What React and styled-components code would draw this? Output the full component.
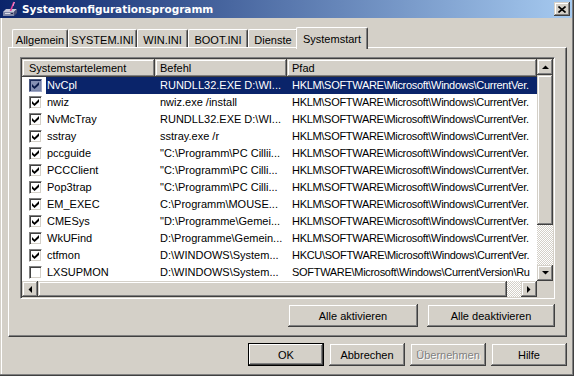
import React from "react";
import styled, { createGlobalStyle, css } from "styled-components";

const GlobalStyle = createGlobalStyle`
  html, body {
    margin: 0;
    padding: 0;
    background: #fff;
  }
  body {
    font-family: "Liberation Sans", Arial, sans-serif;
    font-size: 11px;
    color: #000;
  }
`;

const raised = css`
  background: #d4d0c8;
  box-shadow: inset -1px -1px #404040, inset 1px 1px #d4d0c8,
    inset -2px -2px #808080, inset 2px 2px #fff;
`;

const Window = styled.div`
  width: 574px;
  height: 376px;
  box-sizing: border-box;
  background: #d4d0c8;
  display: flex;
  flex-direction: column;
  box-shadow: inset -1px -1px #404040, inset -2px -2px #808080,
    inset 1px 0 #d4d0c8, inset 2px 0 #fff;
`;

const TitleBar = styled.div`
  height: 18px;
  margin-right: 2px;
  display: flex;
  align-items: center;
  padding-left: 2px;
  background: linear-gradient(to right, #0a246a, #a6caf0);
  color: #fff;
  font-family: "DejaVu Sans", sans-serif;
  font-weight: bold;
  font-size: 10.5px;
`;

const TitleText = styled.span`
  margin-left: 4px;
  flex: 1;
`;

const CloseBtn = styled.div`
  width: 16px;
  height: 14px;
  margin-right: 2px;
  display: flex;
  align-items: center;
  justify-content: center;
  ${raised};
`;

const Body = styled.div`
  flex: 1;
  display: flex;
  flex-direction: column;
  padding: 9px 7px 0 8px;
`;

const TabRow = styled.div`
  height: 20px;
  display: flex;
  align-items: flex-end;
  padding-left: 4px;
`;

const Tab = styled.div`
  box-sizing: border-box;
  width: ${(p) => p.$w}px;
  height: 18px;
  padding-top: 2px;
  display: flex;
  align-items: center;
  justify-content: center;
  background: #d4d0c8;
  border-top: 1px solid #fff;
  border-left: 1px solid #fff;
  border-right: 1px solid #404040;
  border-top-left-radius: 2px;
  border-top-right-radius: 2px;
  box-shadow: inset -1px 0 #808080;
  white-space: nowrap;

  ${(p) =>
    p.$active &&
    css`
      height: 22px;
      padding-top: 0;
      margin: 0 -2px -2px;
      position: relative;
      z-index: 1;
    `}
`;

const Panel = styled.div`
  box-sizing: border-box;
  height: 290px;
  border-top: 1px solid #fff;
  border-left: 1px solid #fff;
  border-right: 1px solid #404040;
  border-bottom: 1px solid #404040;
  box-shadow: inset -1px -1px #808080;
  padding: 9px 11px 9px 11px;
  display: flex;
  flex-direction: column;
  gap: 5px;
`;

const ListView = styled.div`
  height: 242px;
  box-sizing: border-box;
  background: #fff;
  border: 1px solid;
  border-color: #808080 #fff #fff #808080;
  box-shadow: inset 1px 1px #404040, inset -1px -1px #d4d0c8;
  padding: 1px;
  display: grid;
  grid-template-columns: 1fr 16px;
  grid-template-rows: 1fr 16px;
  overflow: hidden;
`;

const Table = styled.div`
  min-width: 0;
  overflow: hidden;
  display: flex;
  flex-direction: column;
`;

const HeaderRow = styled.div`
  display: flex;
  height: 18px;
  flex: none;
`;

const HeaderCell = styled.div`
  box-sizing: border-box;
  ${(p) => (p.$w ? `flex: 0 0 ${p.$w}px;` : "flex: 1;")}
  padding-left: ${(p) => p.$pad || 6}px;
  display: flex;
  align-items: center;
  white-space: nowrap;
  overflow: hidden;
  ${raised};
`;

const Row = styled.div`
  display: flex;
  height: 17px;
  flex: none;
`;

const CheckCell = styled.div`
  flex: 0 0 24px;
  box-sizing: border-box;
  padding-left: 7px;
  display: flex;
  align-items: center;
`;

const Cell = styled.div`
  box-sizing: border-box;
  ${(p) => (p.$w ? `flex: 0 0 ${p.$w}px;` : "flex: 1; min-width: 0;")}
  padding-left: ${(p) => p.$pad}px;
  line-height: 17px;
  white-space: nowrap;
  overflow: hidden;
  letter-spacing: ${(p) => p.$tight || 0}px;
  background: ${(p) => (p.$sel ? "#0a246a" : "transparent")};
  color: ${(p) => (p.$sel ? "#fff" : "#000")};
`;

const Box = styled.span`
  width: 13px;
  height: 13px;
  box-sizing: border-box;
  border: 1px solid;
  border-color: ${(p) =>
    p.$sel ? "#4a5880 #a0a8c8 #a0a8c8 #4a5880" : "#808080 #fff #fff #808080"};
  box-shadow: ${(p) =>
    p.$sel
      ? "inset 1px 1px #1a2a5a, inset -1px -1px #7a86a8"
      : "inset 1px 1px #404040, inset -1px -1px #d4d0c8"};
  background: ${(p) => (p.$sel ? "#8590b4" : "#fff")};
  display: flex;
  align-items: center;
  justify-content: center;
`;

const VScroll = styled.div`
  display: flex;
  flex-direction: column;
`;

const HScroll = styled.div`
  display: flex;
  min-width: 0;
`;

const ScrollBtn = styled.div`
  flex: none;
  width: 16px;
  height: 16px;
  box-sizing: border-box;
  display: flex;
  align-items: center;
  justify-content: center;
  ${raised};
`;

const Thumb = styled.div`
  flex: none;
  box-sizing: border-box;
  ${(p) => (p.$vertical ? `height: ${p.$size}px;` : `width: ${p.$size}px;`)}
  ${raised};
`;

const Track = styled.div`
  flex: 1;
  background: repeating-conic-gradient(#d4d0c8 0 25%, #fff 0 50%) 0 0 / 2px 2px;
`;

const Corner = styled.div`
  background: #d4d0c8;
`;

const ButtonRow = styled.div`
  display: flex;
  justify-content: flex-end;
  gap: ${(p) => p.$gap}px;
  flex: none;
  margin-top: ${(p) => p.$top || 0}px;
`;

const Button = styled.div`
  box-sizing: border-box;
  width: ${(p) => p.$w}px;
  height: 23px;
  display: flex;
  align-items: center;
  justify-content: center;
  ${raised};
  ${(p) =>
    p.$default &&
    css`
      box-shadow: inset 0 0 0 1px #000, inset -2px -2px #404040,
        inset 2px 2px #fff, inset -3px -3px #808080;
    `}
  ${(p) =>
    p.$disabled &&
    css`
      color: #808080;
      text-shadow: 1px 1px #fff;
    `}
`;

const Arrow = ({ dir }) => {
  const pts = {
    up: "0,4 7,4 3.5,0.5",
    down: "0,0 7,0 3.5,3.5",
    left: "4,0 4,7 0.5,3.5",
    right: "0,0 0,7 3.5,3.5",
  }[dir];
  const vertical = dir === "up" || dir === "down";
  return (
    <svg
      width={vertical ? 7 : 4}
      height={vertical ? 4 : 7}
      viewBox={vertical ? "0 0 7 4" : "0 0 4 7"}
    >
      <polygon points={pts} fill="#000" />
    </svg>
  );
};

const CheckMark = ({ color }) => (
  <svg width="7" height="7" viewBox="0 0 7 7">
    <polygon points="0,2 2.5,4.5 7,0 7,3 2.5,7 0,4.8" fill={color} />
  </svg>
);

const AppIcon = () => (
  <svg width="16" height="16" viewBox="0 0 16 16">
    <polygon points="1,11 4,8 15,8 12,11" fill="#c8c8d8" />
    <rect x="1" y="11" width="11" height="4" fill="#8088a8" />
    <polygon points="12,11 15,8 15,12 12,15" fill="#4a5078" />
    <rect x="3" y="12" width="5" height="1" fill="#d8dce8" />
    <rect x="9" y="12" width="2" height="1" fill="#20284a" />
    <line x1="12" y1="1" x2="8.5" y2="10" stroke="#e0409a" strokeWidth="1.6" />
    <line x1="12.5" y1="1" x2="11" y2="5" stroke="#ffb0e0" strokeWidth="0.8" />
  </svg>
);

const CloseGlyph = () => (
  <svg width="8" height="7" viewBox="0 0 8 7">
    <path d="M0.5 0.5 L7.5 6.5 M7.5 0.5 L0.5 6.5" stroke="#000" strokeWidth="1.6" />
  </svg>
);

const HK = "HKLM\\SOFTWARE\\Microsoft\\Windows\\CurrentVer.";

const rows = [
  ["NvCpl", "RUNDLL32.EXE D:\\WI...", HK, true],
  ["nwiz", "nwiz.exe /install", HK, true],
  ["NvMcTray", "RUNDLL32.EXE D:\\WI...", HK, true],
  ["sstray", "sstray.exe /r", HK, true],
  ["pccguide", "\"C:\\Programm\\PC Cillii...", HK, true],
  ["PCCClient", "\"C:\\Programm\\PC Cilli...", HK, true],
  ["Pop3trap", "\"C:\\Programm\\PC Cilli...", HK, true],
  ["EM_EXEC", "C:\\Programm\\MOUSE...", HK, true],
  ["CMESys", "\"D:\\Programme\\Gemei...", HK, true],
  ["WkUFind", "D:\\Programme\\Gemein...", HK, true],
  ["ctfmon", "D:\\WINDOWS\\System...", "HKCU\\SOFTWARE\\Microsoft\\Windows\\CurrentVer.", true],
  ["LXSUPMON", "D:\\WINDOWS\\System...", "SOFTWARE\\Microsoft\\Windows\\CurrentVersion\\Ru", false],
];

const tabs = [
  ["Allgemein", 56],
  ["SYSTEM.INI", 69],
  ["WIN.INI", 51],
  ["BOOT.INI", 60],
  ["Dienste", 50],
  ["Systemstart", 72],
];

export default function App() {
  return (
    <>
      <GlobalStyle />
      <Window>
        <TitleBar>
          <AppIcon />
          <TitleText>Systemkonfigurationsprogramm</TitleText>
          <CloseBtn>
            <CloseGlyph />
          </CloseBtn>
        </TitleBar>
        <Body>
          <TabRow>
            {tabs.map(([label, w]) => (
              <Tab key={label} $w={w} $active={label === "Systemstart"}>
                {label}
              </Tab>
            ))}
          </TabRow>
          <Panel>
            <ListView>
              <Table>
                <HeaderRow>
                  <HeaderCell $w={133} $pad={7}>Systemstartelement</HeaderCell>
                  <HeaderCell $w={132} $pad={5}>Befehl</HeaderCell>
                  <HeaderCell $pad={5}>Pfad</HeaderCell>
                </HeaderRow>
                {rows.map(([name, cmd, path, checked], i) => {
                  const sel = i === 0;
                  return (
                    <Row key={name}>
                      <CheckCell>
                        <Box $sel={sel}>
                          {checked && <CheckMark color={sel ? "#0a1a4a" : "#000"} />}
                        </Box>
                      </CheckCell>
                      <Cell $w={109} $pad={1} $sel={sel}>{name}</Cell>
                      <Cell $w={132} $pad={5} $sel={sel}>{cmd}</Cell>
                      <Cell $pad={5} $sel={sel} $tight={-0.3}>{path}</Cell>
                    </Row>
                  );
                })}
              </Table>
              <VScroll>
                <ScrollBtn><Arrow dir="up" /></ScrollBtn>
                <Thumb $vertical $size={150} />
                <Track />
                <ScrollBtn><Arrow dir="down" /></ScrollBtn>
              </VScroll>
              <HScroll>
                <ScrollBtn><Arrow dir="left" /></ScrollBtn>
                <Thumb $size={469} />
                <Track />
                <ScrollBtn><Arrow dir="right" /></ScrollBtn>
              </HScroll>
              <Corner />
            </ListView>
            <ButtonRow $gap={9}>
              <Button $w={130}>Alle aktivieren</Button>
              <Button $w={128}>Alle deaktivieren</Button>
            </ButtonRow>
          </Panel>
          <ButtonRow $gap={5} $top={6}>
            <Button $w={76} $default>OK</Button>
            <Button $w={76}>Abbrechen</Button>
            <Button $w={76} $disabled>Übernehmen</Button>
            <Button $w={76}>Hilfe</Button>
          </ButtonRow>
        </Body>
      </Window>
    </>
  );
}
